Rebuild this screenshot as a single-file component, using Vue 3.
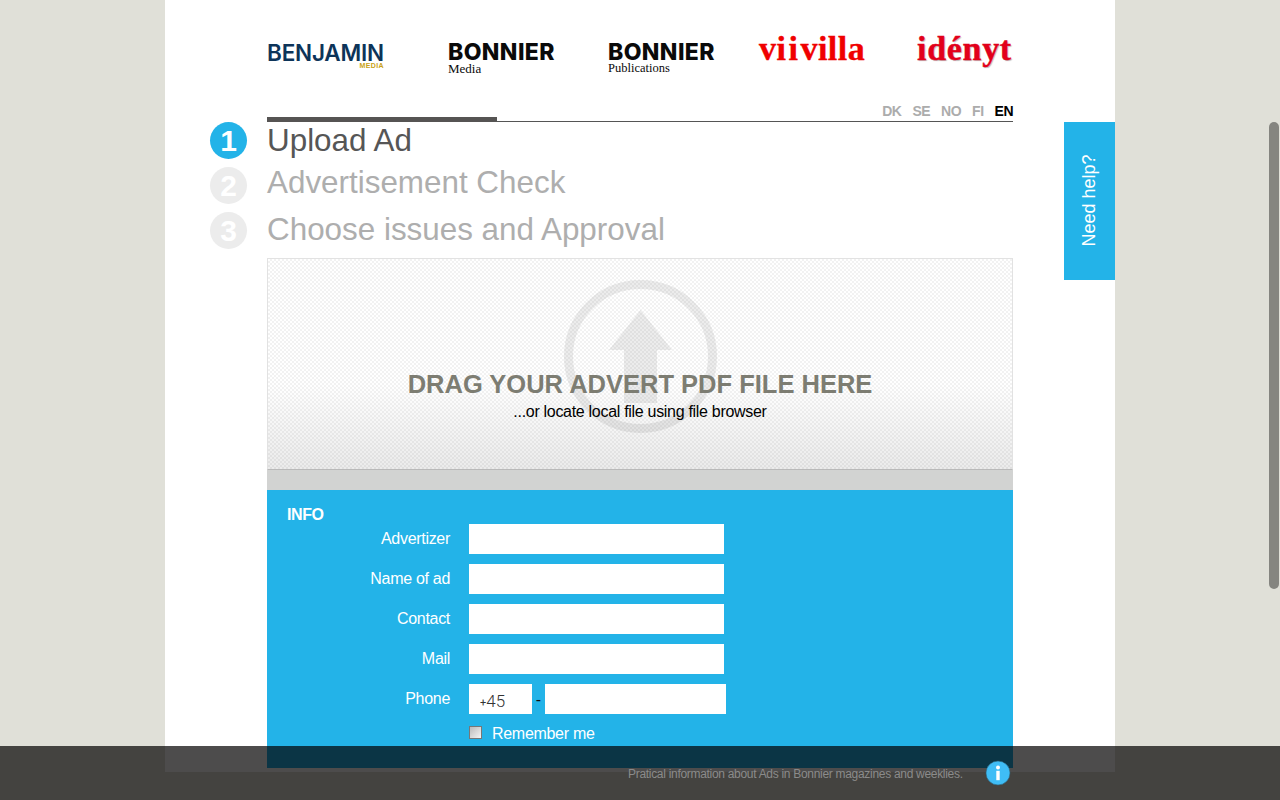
<script setup>
const logos = [
  { key: 'benjamin', name: 'BENJAMIN', sub: 'MEDIA' },
  { key: 'bmedia', name: 'BONNIER', sub: 'Media' },
  { key: 'bpub', name: 'BONNIER', sub: 'Publications' },
  { key: 'viivilla', name: 'vi i villa', sub: '' },
  { key: 'idenyt', name: 'idényt', sub: '' }
]
const langs = ['DK', 'SE', 'NO', 'FI', 'EN']
const steps = [
  { n: 1, label: 'Upload Ad', cls: 'on' },
  { n: 2, label: 'Advertisement Check', cls: 'two' },
  { n: 3, label: 'Choose issues and Approval', cls: 'three' }
]
const fields = ['Advertizer', 'Name of ad', 'Contact', 'Mail']
</script>

<template>
  <div class="viewport">
    <div class="sheet">
      <div class="logos">
        <div v-for="l in logos" :key="l.key" class="logo" :class="l.key">
          <span class="logo-name">{{ l.name }}</span>
          <span v-if="l.sub" class="logo-sub">{{ l.sub }}</span>
        </div>
      </div>

      <div class="langs">
        <span v-for="l in langs" :key="l" :class="{ cur: l === 'EN' }">{{ l }}</span>
      </div>
      <div class="rule"><div class="rule-fill"></div></div>

      <div v-for="s in steps" :key="s.n" class="step" :class="s.cls">
        <div class="bullet">{{ s.n }}</div>
        <div class="step-label">{{ s.label }}</div>
      </div>

      <div class="main">
        <div class="drop">
          <svg class="drop-icon" width="154" height="154" viewBox="0 0 154 154">
            <g opacity="0.07">
              <circle cx="76.5" cy="76.5" r="72" fill="none" stroke="#000" stroke-width="9" />
              <path d="M76.5 30 L108 70 L93 70 L93 123 L60 123 L60 70 L45 70 Z" fill="#000" />
            </g>
          </svg>
          <div class="drop-title">DRAG YOUR ADVERT PDF FILE HERE</div>
          <div class="drop-sub">...or locate local file using file browser</div>
        </div>
        <div class="band"></div>
        <form class="info">
          <div class="info-title">INFO</div>
          <div v-for="f in fields" :key="f" class="row">
            <label class="lab">{{ f }}</label>
            <input class="inp wide" type="text" />
          </div>
          <div class="row">
            <label class="lab">Phone</label>
            <div class="inp code"><span class="plus">+</span>45</div>
            <span class="dash">-</span>
            <input class="inp num" type="text" />
          </div>
          <div class="remember">
            <span class="check"></span>
            <span>Remember me</span>
          </div>
        </form>
      </div>

      <div class="help"><span>Need help?</span></div>
    </div>

    <div class="scroll-thumb"></div>

    <div class="footer">
      <span class="foot-text">Pratical information about Ads in Bonnier magazines and weeklies.</span>
      <svg class="foot-icon" width="26" height="26" viewBox="0 0 26 26">
        <circle cx="13" cy="13" r="12" fill="#3fbdf6" stroke="#2d5f75" stroke-width="0.6" />
        <circle cx="13" cy="7.6" r="2" fill="#fff" />
        <rect x="11.3" y="10.8" width="3.4" height="9.4" fill="#fff" />
      </svg>
    </div>
  </div>
</template>

<style>
html, body { margin: 0; overflow: hidden; background: #e0e0d8; }
</style>

<style scoped>
.viewport {
  position: relative;
  width: 1280px;
  height: 800px;
  overflow: hidden;
  background: #e0e0d8;
  font-family: "Liberation Sans", Arial, sans-serif;
}
.sheet {
  position: relative;
  box-sizing: border-box;
  width: 950px;
  height: 772px;
  margin-left: 165px;
  padding-left: 45px;
  background: #fff;
}
.logos {
  display: flex;
  height: 103px;
  margin-left: 57px;
  box-sizing: border-box;
}
.logo { display: flex; flex-direction: column; flex: none; white-space: pre; }
.benjamin { width: 181px; padding-top: 43px; color: #0d3459; }
.benjamin .logo-name { font: 600 22.5px/20px "Inter", sans-serif; letter-spacing: -0.2px; }
.benjamin .logo-sub { width: 117px; text-align: right; font: 700 7px/6px "Liberation Sans", sans-serif; color: #c9a217; letter-spacing: 0.4px; }
.bmedia, .bpub { padding-top: 43px; color: #0a0a0a; }
.bmedia { width: 160px; }
.bpub { width: 151px; }
.bmedia .logo-name, .bpub .logo-name { font: 800 23px/19px "Inter", sans-serif; letter-spacing: 0.4px; }
.bmedia .logo-sub { font: 13px/13px "Liberation Serif", serif; }
.bpub .logo-sub { font: 12.5px/13px "Liberation Serif", serif; }
.viivilla { width: 158px; padding-top: 30px; color: #f00000; }
.viivilla .logo-name { font: 700 34px/38px "Liberation Serif", serif; word-spacing: -7px; letter-spacing: 0.5px; -webkit-text-stroke: 0.4px #f00000; }
.idenyt { padding-top: 30px; color: #e2001a; }
.idenyt .logo-name { font: 700 34px/38px "Liberation Serif", serif; letter-spacing: 0.7px; -webkit-text-stroke: 0.4px #e2001a; text-shadow: 1px 1px 1px #bbb; }

.langs {
  display: flex;
  justify-content: flex-end;
  gap: 11px;
  width: 746px;
  height: 18px;
  margin-left: 57px;
  font-size: 14px;
  line-height: 17px;
  font-weight: 700;
  letter-spacing: -0.5px;
  color: #acacac;
}
.langs .cur { color: #000; }
.rule {
  position: relative;
  width: 746px;
  height: 1px;
  margin-left: 57px;
  background: #555;
}
.rule-fill {
  position: absolute;
  left: 0;
  bottom: 0;
  width: 230px;
  height: 5px;
  background: #565453;
}
.step { display: flex; }
.bullet {
  flex: none;
  width: 37px;
  height: 37px;
  margin-right: 20px;
  border-radius: 50%;
  background: #ececec;
  color: #fff;
  font-size: 30px;
  font-weight: 700;
  line-height: 38px;
  text-align: center;
}
.step-label {
  font-size: 31.4px;
  color: #aeaeae;
  white-space: nowrap;
}
.step.on { height: 45px; }
.step.on .bullet { background: #23b3e8; }
.step.on .step-label { color: #565656; line-height: 38px; }
.step.two { height: 45px; }
.step.two .step-label { line-height: 32px; }
.step.three { height: 46px; }
.step.three .step-label { line-height: 36px; }

.main { width: 746px; margin-left: 57px; }
.drop {
  position: relative;
  box-sizing: border-box;
  height: 212px;
  padding-top: 110px;
  border: 1px solid #e2e2e2;
  border-bottom: 1px solid #b9b9b9;
  text-align: center;
  background-image:
    linear-gradient(to bottom, #fff 60%, #ebebeb 100%),
    repeating-conic-gradient(#f2f2f2 0 25%, #fff 0 50%);
  background-size: auto, 4px 4px;
  background-blend-mode: multiply;
}
.drop-icon { position: absolute; left: 296px; top: 21px; }
.drop-title {
  position: relative;
  font-size: 25.5px;
  line-height: 30px;
  font-weight: 700;
  color: #7d7d72;
}
.drop-sub {
  position: relative;
  font-size: 16px;
  line-height: 26px;
  letter-spacing: -0.3px;
  color: #000;
}
.band { height: 20px; background: #d2d3d2; }
.info {
  box-sizing: border-box;
  height: 278px;
  padding: 15px 0 0 20px;
  background: #23b3e8;
  color: #fff;
  font-size: 16px;
}
.info-title {
  height: 19px;
  font-weight: 700;
  line-height: 19px;
  letter-spacing: -0.4px;
}
.row { display: flex; height: 30px; margin-bottom: 10px; }
.lab {
  flex: none;
  width: 163px;
  text-align: right;
  line-height: 30px;
  letter-spacing: -0.3px;
}
.inp {
  box-sizing: border-box;
  height: 30px;
  margin: 0;
  padding: 0 11px;
  border: 0;
  border-radius: 0;
  background: #fff;
  outline: none;
  font-family: "Liberation Sans", sans-serif;
}
.lab + .inp { margin-left: 19px; }
.wide { width: 255px; }
.code {
  width: 63px;
  font-family: "Roboto", sans-serif;
  font-size: 17px;
  font-weight: 300;
  line-height: 34px;
  color: #333;
}
.plus { font-size: 11px; font-weight: 400; vertical-align: 1px; }
.num { width: 181px; }
.dash { width: 13px; text-align: center; color: #111; line-height: 32px; }
.remember {
  display: flex;
  align-items: center;
  gap: 10px;
  margin-left: 182px;
  padding-top: 1px;
  letter-spacing: -0.3px;
  line-height: 18px;
}
.check {
  box-sizing: border-box;
  width: 13px;
  height: 13px;
  margin-top: -3px;
  border: 1px solid #777;
  background: linear-gradient(135deg, #bbb, #f4f4f4);
}
.help {
  position: absolute;
  left: 899px;
  top: 122px;
  display: flex;
  align-items: center;
  justify-content: center;
  width: 51px;
  height: 158px;
  background: #23b3e8;
  color: #fff;
  font-size: 18px;
}
.help span { display: block; transform: translate(0, -1px) rotate(-90deg); white-space: nowrap; }
.scroll-thumb {
  position: absolute;
  left: 1269px;
  top: 122px;
  width: 10px;
  height: 467px;
  border-radius: 5px;
  background: #858580;
}
.footer {
  position: absolute;
  left: 0;
  right: 0;
  bottom: 0;
  height: 54px;
  background: rgba(2, 0, 0, .7);
}
.foot-text {
  position: absolute;
  left: 628px;
  top: 20px;
  font-size: 12px;
  line-height: 16px;
  letter-spacing: -0.3px;
  color: #8b8b8b;
  white-space: nowrap;
}
.foot-icon { position: absolute; left: 985px; top: 14px; }
</style>
